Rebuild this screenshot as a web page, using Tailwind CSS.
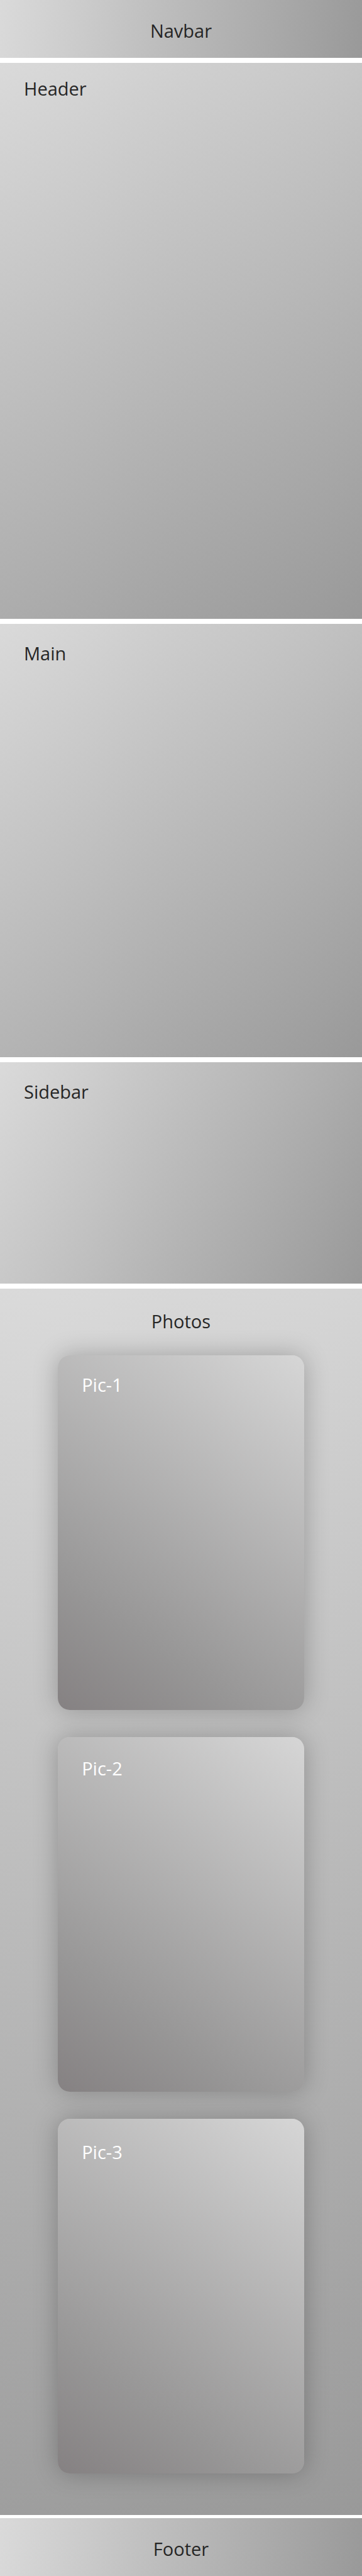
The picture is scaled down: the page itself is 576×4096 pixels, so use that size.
<!DOCTYPE html>
<html lang="en">
<head>
<meta charset="utf-8">
<meta name="viewport" content="width=device-width, initial-scale=1">
<title>Layout</title>
<script src="https://cdn.jsdelivr.net/npm/@tailwindcss/browser@4"></script>
</head>
<body class="flex flex-col gap-2 bg-white font-['Open_Sans','Noto_Sans',sans-serif] text-[29px] leading-10 text-[#262626]">
  <nav class="min-h-[92px] bg-[linear-gradient(99deg,#dadada,#999999)] pt-[29px] text-center">Navbar</nav>
  <header class="min-h-[884px] bg-[linear-gradient(147deg,#dadada,#999999)] px-[38px] pt-[21px]">Header</header>
  <main class="min-h-[689px] bg-[linear-gradient(140deg,#dadada,#999999)] px-[38px] pt-[27px]">Main</main>
  <aside class="min-h-[352px] bg-[linear-gradient(121deg,#dadada,#999999)] px-[38px] pt-[27px]">Sidebar</aside>
  <div class="flex flex-col gap-[5px]">
    <section class="bg-[linear-gradient(164deg,#dadada,#999999)] px-[16%] pt-8 pb-[66px]">
      <h2 class="mb-[34px] text-center">Photos</h2>
      <div class="flex flex-col gap-[43px] text-white">
        <article class="min-h-[564px] rounded-[19px] bg-[linear-gradient(35deg,#858182,#979696_25%,#d6d6d6)] px-[38px] pt-[27px] shadow-[0_0_38px_rgba(0,0,0,0.25)]">Pic-1</article>
        <article class="min-h-[564px] rounded-[19px] bg-[linear-gradient(35deg,#858182,#979696_25%,#d6d6d6)] px-[38px] pt-[30px] shadow-[0_0_38px_rgba(0,0,0,0.25)]">Pic-2</article>
        <article class="min-h-[564px] rounded-[19px] bg-[linear-gradient(35deg,#858182,#979696_25%,#d6d6d6)] px-[38px] pt-[33px] shadow-[0_0_38px_rgba(0,0,0,0.25)]">Pic-3</article>
      </div>
    </section>
    <footer class="min-h-[92px] bg-[linear-gradient(99deg,#dadada,#999999)] pt-[29px] text-center">Footer</footer>
  </div>
</body>
</html>
